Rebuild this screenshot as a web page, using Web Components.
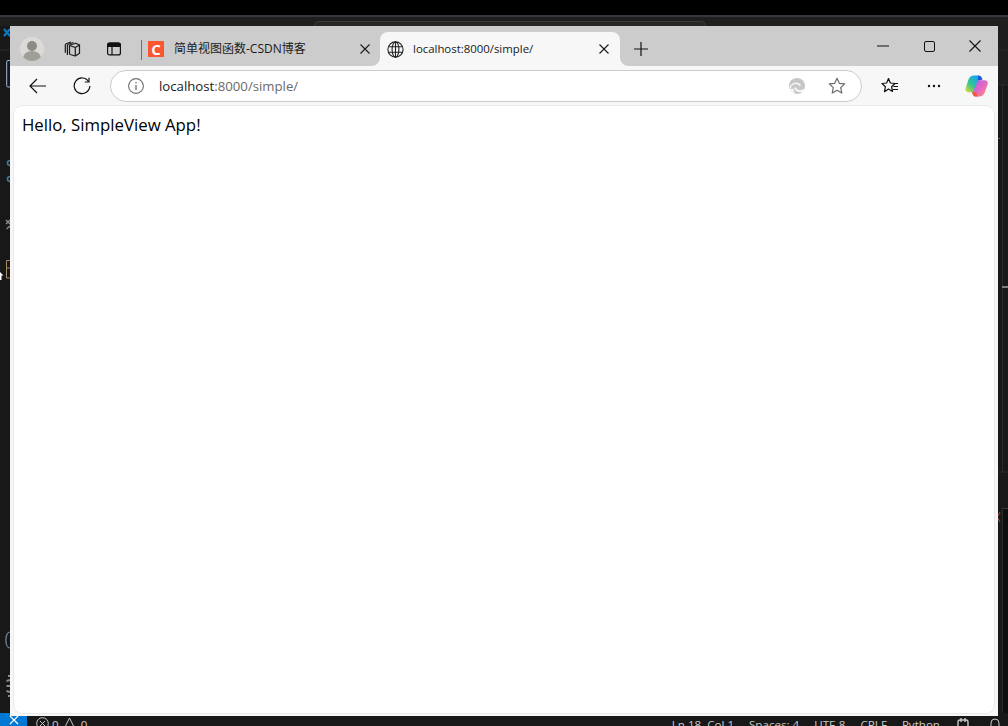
<!DOCTYPE html>
<html lang="zh">
<head>
<meta charset="utf-8">
<title>localhost:8000/simple/</title>
<style>
  html, body { margin: 0; height: 100%; overflow: hidden; background: #181818; }
  body { font-family: "Open Sans", "Noto Sans CJK SC", sans-serif; }
</style>
</head>
<body>

<ide-backdrop>
  <browser-window>
    <tab-item slot="tabs" title-text="简单视图函数-CSDN博客" icon="csdn"></tab-item>
    <tab-item slot="tabs" title-text="localhost:8000/simple/" icon="globe" active></tab-item>
    <address-bar slot="toolbar" host-text="localhost" path-text=":8000/simple/"></address-bar>
    <hello-page>Hello, SimpleView App!</hello-page>
  </browser-window>
</ide-backdrop>

<script>
'use strict';

const ICONS = {
  collections: '<svg width="18" height="18" viewBox="0 0 18 18" fill="none" stroke="#1a1a1a" stroke-width="1.2" stroke-linejoin="round"><path d="M6.5 5.200 12.800 3.200 16.500 5v8.300L12.300 16 7.300 14.500C6.800 14.300 6.500 14 6.500 13.500z"/><path d="M12.300 16V7.500L6.700 5.500M12.300 7.500 16.500 5"/><path d="M4.400 15V5.400c0-.5.300-.9.800-1.100L10.500 2.500"/><path d="M2.300 12.800V5c0-.6.300-1 .9-1.200L8 2"/></svg>',
  verticalTabs: '<svg width="16" height="16" viewBox="0 0 16 16" fill="none" stroke="#111" stroke-width="1.2"><rect x="1.6" y="2.1" width="12.8" height="11.8" rx="2"/><path d="M6 5.5v8.4"/><path d="M1.6 4.2c0-1.2 1-2.1 2-2.1h8.8c1 0 2 .9 2 2.1v1.3H1.6z" fill="#111"/></svg>',
  close: '<svg width="10" height="10" viewBox="0 0 10 10" stroke="#1a1a1a" stroke-width="1.1"><path d="M.5.5l9 9M9.5.5l-9 9"/></svg>',
  globe: '<svg width="17" height="17" viewBox="0 0 17 17" fill="none" stroke="#222" stroke-width="1.1"><circle cx="8.5" cy="8.5" r="7.6"/><ellipse cx="8.5" cy="8.5" rx="3.4" ry="7.6"/><path d="M8.5.9v15.2M1.5 5.8h14M1.5 11.2h14"/></svg>',
  plus: '<svg width="14" height="14" viewBox="0 0 14 14" stroke="#111" stroke-width="1.2"><path d="M7 0v14M0 7h14"/></svg>',
  back: '<svg width="18" height="16" viewBox="0 0 18 16" fill="none" stroke="#111" stroke-width="1.2"><path d="M17 8H1M8 1 1 8l7 7"/></svg>',
  refresh: '<svg width="18" height="18" viewBox="0 0 18 18" fill="none" stroke="#111" stroke-width="1.2"><path d="M15.6 4.6A7.8 7.8 0 1 0 16.8 9"/><path d="M16 .8v4.2h-4.2"/></svg>',
  info: '<svg width="16" height="16" viewBox="0 0 16 16" fill="none" stroke="#6e6e6e" stroke-width="1.1"><circle cx="8" cy="8" r="7.4"/><path d="M8 7v5" stroke-width="1.3"/><circle cx="8" cy="4.7" r=".8" fill="#6e6e6e" stroke="none"/></svg>',
  edge: '<svg width="16" height="16" viewBox="0 0 16 16" fill="none"><circle cx="8" cy="8" r="8" fill="#c6c6c6"/><path d="M.8 10.500C2 6.800 5.200 5 8 5.400c1.800.3 3 1.300 3.300 2.600" stroke="#f7f7f7" stroke-width="1.500"/><path d="M6.200 9.500c.3 3 4 5 9 2.500" stroke="#f7f7f7" stroke-width="2"/><path d="M.5 11c1.500 3 4 4.800 7 5-2-1.200-3.200-3-3-5.500z" fill="#f7f7f7"/></svg>',
  star: '<svg width="18" height="18" viewBox="0 0 18 18" fill="none" stroke="#6a6a6a" stroke-width="1.2" stroke-linejoin="round"><path d="M9 1.300l2.300 5 5.400.6-4 3.700 1.100 5.400L9 13.300 4.200 16l1.100-5.400-4-3.700 5.400-.6z"/></svg>',
  favorites: '<svg width="18" height="18" viewBox="0 0 18 18" fill="none" stroke="#111" stroke-width="1.2" stroke-linejoin="round"><path d="M7.500 1.500 9.400 6l4.600.5-3.400 3.200.9 4.700-4-2.400-4 2.700.9-5L1 6.500 5.600 6z"/><path d="M12.500 9.500H17M11.500 12.500H17M14 6.500h3"/></svg>',
  more: '<svg width="14" height="4" viewBox="0 0 14 4" fill="#111"><circle cx="2" cy="2" r="1.200"/><circle cx="7" cy="2" r="1.200"/><circle cx="12" cy="2" r="1.200"/></svg>',
  copilot: `<svg width="23" height="22" viewBox="0 0 24 22">
    <defs>
      <linearGradient id="cpA" x1="0" y1="1" x2="1" y2="0"><stop offset="0" stop-color="#f0dc30"/><stop offset=".4" stop-color="#35c98a"/><stop offset=".8" stop-color="#1aa6ee"/><stop offset="1" stop-color="#1f7fe6"/></linearGradient>
      <linearGradient id="cpB" x1="0" y1="0" x2="1" y2="1"><stop offset="0" stop-color="#a55cf0"/><stop offset=".6" stop-color="#ee6cb8"/><stop offset="1" stop-color="#fba35c"/></linearGradient>
    </defs>
    <path d="M9.500 0h5l2 4-6 13.500H4C1.500 17.500 0 16 .4 13.800L3.500 4.500C4.500 1.500 6.500 0 9.500 0z" fill="url(#cpA)"/>
    <path d="M14 0c2 0 3.200 1.300 3.700 3l.6 1.500-5 .5z" fill="#1b54d8"/>
    <path d="M13.500 5h6.500c2.700 0 4.300 1.800 3.700 4l-3 8.500c-.9 2.700-3 4.500-5.700 4.500h-5l-2-4.500z" fill="url(#cpB)"/>
    <path d="M7 17.500h4.500L13.500 22H11c-2 0-3.200-1.700-4-4.500z" fill="#ee5a3a"/>
  </svg>`,
  csdn: '<span class="csdn">C</span>'
};

// shorthand: shadow root + html in one call
function mount(el, html) {
  el.attachShadow({ mode: 'open' }).innerHTML = html;
}

class IdeBackdrop extends HTMLElement {
  connectedCallback() {
    mount(this, `
      <style>
        :host { display: grid; grid-template-rows: 26px 690px 10px; grid-template-columns: 10px 988px 10px; height: 726px; background: #181818; color: #ccc; }
        .top { grid-column: 1 / 4; background: #000; display: flex; flex-direction: column; }
        .top .band { height: 15px; }
        .top .rule { height: 2px; background: #3b3540; }
        .top .title { flex: 1; background: #1f1f1f; display: flex; justify-content: center; padding-top: 4px; box-sizing: border-box; }
        .top .search { width: 390px; margin-left: 12px; border: 1px solid #3a3a3a; border-bottom: 0; border-radius: 5px 5px 0 0; background: #262626; }
        .left, .right { overflow: hidden; background: #181818; }
        svg { display: block; }
      </style>
      <div class="top"><div class="band"></div><div class="rule"></div><div class="title"><div class="search"></div></div></div>
      <div class="left">
        <svg width="10" height="690" viewBox="0 0 10 690" fill="none">
          <path d="M0 24h10" stroke="#2b2b2b"/>
          <path d="M4 3l6 7M10 3l-6 7" stroke="#0a7ac0" stroke-width="2.200"/>
          <path d="M10 34.500H8c-.8 0-1.300.5-1.300 1.300v24c0 .8.500 1.200 1.300 1.200h2" stroke="#9ab8d8"/>
          <circle cx="10" cy="137" r="2.500" stroke="#4a7a9a" stroke-width="1.500"/>
          <circle cx="10" cy="153" r="2.500" stroke="#4a7a9a" stroke-width="1.500"/>
          <path d="M6 194l4 4M10 194l-4 4M6.500 203l3.500-3" stroke="#8a8a8a" stroke-width="1.500"/>
          <path d="M10 234.500H6.500v17.500H10M10 242H6.500" stroke="#a58a62"/>
          <path d="M0 246l3.500 3.500H1.500V254H0z" fill="#fff"/>
          <path d="M10 606c-5.500 0-5.500 16 0 16" stroke="#7a8a9a" stroke-width="1.200"/>
          <path d="M8 650h2M6.500 655l3.500-1M6.500 660h3.500M6.500 665l3.500 1M8 670h2" stroke="#8a8a8a" stroke-width="2"/>
          <rect y="687" width="10" height="3" fill="#0078d4"/>
        </svg>
      </div>
      <slot></slot>
      <div class="right">
        <svg width="10" height="690" viewBox="0 0 10 690" fill="none">
          <rect width="10" height="59" fill="#1e1e1e"/>
          <rect x="4" y="482" width="6" height="205" fill="#0e0e0e"/>
          <path d="M0 24h10M0 59h10M0 446h10" stroke="#2b2b2b"/>
          <path d="M4.500 59v387M4.500 482v205" stroke="#2a2a2a"/>
          <path d="M4 482.500h6" stroke="#3a3a3a"/>
          <rect x="4" y="260" width="6" height="2" fill="#7d7d7d"/>
          <rect y="112" width="2" height="1" fill="#3c6e3c"/>
          <path d="M0 490l2-4M0 492l2 4" stroke="#b84a4a"/>
        </svg>
      </div>
      <status-bar style="grid-column: 1 / 4"></status-bar>
    `);
  }
}

class StatusBar extends HTMLElement {
  connectedCallback() {
    mount(this, `
      <style>
        :host { display: flex; height: 10px; background: #181818; color: #c8c8c8; font: 11.600px "Open Sans", sans-serif; overflow: hidden; }
        .remote { width: 27px; background: #0078d4; display: flex; justify-content: center; box-sizing: border-box; }
        .left { display: flex; align-items: flex-start; gap: 3px; margin-left: 9px; padding-top: 1px; line-height: 16px; }
        .right { margin-left: auto; display: flex; gap: 15px; padding: 1px 7px 0 0; line-height: 16px; }
        svg { display: block; flex: none; }
        span { white-space: nowrap; }
      </style>
      <div class="remote"><svg width="14" height="10" viewBox="0 0 14 10" fill="none" stroke="#fff" stroke-width="1.200"><path d="M3 0l4 4-4 4M11 0 7 4l4 4"/></svg></div>
      <div class="left">
        <svg width="13" height="13" viewBox="0 0 13 13" fill="none" stroke="#c8c8c8"><circle cx="6.500" cy="6.500" r="5.800"/><path d="M4 4l5 5M9 4l-5 5"/></svg><span>0</span>
        <svg width="13" height="13" viewBox="0 0 13 13" fill="none" stroke="#c8c8c8" style="margin-left:1px"><path d="M6.500 1 12 12H1z"/></svg><span style="margin-left:2px">0</span>
      </div>
      <div class="right">
        <span>Ln 18, Col 1</span><span>Spaces: 4</span><span>UTF-8</span><span>CRLF</span><span>Python</span>
        <svg width="14" height="14" viewBox="0 0 14 14" fill="none" stroke="#c8c8c8" stroke-width="1.400" style="margin-left:1px"><rect x="2" y="3" width="10" height="8" rx="2"/><path d="M5 1v4M9 1v4"/></svg>
        <svg width="12" height="14" viewBox="0 0 12 14" fill="none" stroke="#c8c8c8" style="margin-left:4px"><path d="M2 12V6a4 4 0 0 1 8 0v6"/></svg>
      </div>
    `);
  }
}

class BrowserWindow extends HTMLElement {
  connectedCallback() {
    mount(this, `
      <style>
        :host { display: flex; flex-direction: column; background: #f7f7f7; min-width: 0; }
        .strip { height: 40px; background: #ccc; display: flex; align-items: stretch; flex: none; }
        .profile { width: 44px; display: flex; align-items: center; justify-content: center; padding: 6px 0 0 0; box-sizing: border-box; }
        .avatar { width: 24px; height: 24px; border-radius: 50%; background: #dcdad6; position: relative; overflow: hidden; }
        .avatar::before { content: ""; position: absolute; left: 7px; top: 4px; width: 10px; height: 10px; border-radius: 50%; background: #8d8b86; }
        .avatar::after { content: ""; position: absolute; left: 3px; top: 14px; width: 18px; height: 14px; border-radius: 50%; background: #a09e99; }
        .btn { display: flex; align-items: center; justify-content: center; padding-top: 6px; box-sizing: border-box; flex: none; }
        .sep { width: 1px; height: 20px; background: #6f6f6f; align-self: center; margin: 8px 5px 0 6px; flex: none; }
        .tabs { display: flex; align-items: flex-end; }
        .caption { margin-left: auto; display: flex; }
        .caption div { width: 46px; height: 40px; display: flex; align-items: center; justify-content: center; }
        .bar { height: 39px; display: flex; align-items: center; flex: none; }
        .tool { display: flex; align-items: center; justify-content: center; flex: none; box-sizing: border-box; }
        .view { flex: 1; display: flex; padding: 1px 4px 3px 4px; min-height: 0; background: #f7f7f7; }
      </style>
      <div class="strip">
        <div class="profile"><div class="avatar"></div></div>
        <div class="btn" style="width:41px; margin-left:-3px">${ICONS.collections}</div>
        <div class="btn" style="width:43px">${ICONS.verticalTabs}</div>
        <div class="sep"></div>
        <div class="tabs"><slot name="tabs"></slot></div>
        <div class="btn" style="width:42px; padding-top:5px">${ICONS.plus}</div>
        <div class="caption">
          <div><svg width="12" height="2" viewBox="0 0 12 2" stroke="#111"><path d="M0 1h12"/></svg></div>
          <div><svg width="11" height="11" viewBox="0 0 11 11" fill="none" stroke="#111"><rect x=".5" y=".5" width="10" height="10" rx="1.500"/></svg></div>
          <div><svg width="12" height="12" viewBox="0 0 12 12" stroke="#111" stroke-width="1.100"><path d="M.5.5l11 11M11.500.5l-11 11"/></svg></div>
        </div>
      </div>
      <div class="bar">
        <div class="tool" style="width:56px">${ICONS.back}</div>
        <div class="tool" style="width:32px">${ICONS.refresh}</div>
        <slot name="toolbar"></slot>
        <div class="tool" style="width:56px">${ICONS.favorites}</div>
        <div class="tool" style="width:32px">${ICONS.more}</div>
        <div class="tool" style="width:48px; padding-left:4px">${ICONS.copilot}</div>
      </div>
      <div class="view"><slot></slot></div>
    `);
  }
}

class TabItem extends HTMLElement {
  connectedCallback() {
    mount(this, `
      <style>
        :host { display: flex; align-items: center; height: 34px; box-sizing: border-box; position: relative; font: 12px "Open Sans", "Noto Sans CJK SC", sans-serif; color: #1a1a1a; flex: none; }
        :host([active]) { width: 240px; background: #f7f7f7; border-radius: 8px 8px 0 0; padding-left: 6px; font-size: 11.400px; --x-gap: 11px; }
        :host(:not([active])) { width: 233px; --x-gap: 10px; }
        /* the little reverse corners either side of the active tab */
        :host([active])::before, :host([active])::after { content: ""; position: absolute; bottom: 0; width: 8px; height: 8px; background: radial-gradient(circle at var(--cx) 0, #ccc 7.5px, #f7f7f7 8px); }
        :host([active])::before { left: -8px; --cx: 0; }
        :host([active])::after { right: -8px; --cx: 100%; }
        .ico { width: 18px; height: 18px; display: flex; align-items: center; justify-content: center; flex: none; }
        .csdn { width: 16px; height: 16px; background: #fc5531; color: #fff; font: 700 15px/16px "Open Sans", sans-serif; text-align: center; display: block; }
        .label { margin-left: 9px; padding-bottom: 2px; white-space: nowrap; flex: 1; }
        .x { width: 10px; height: 10px; margin-right: var(--x-gap); display: flex; flex: none; }
      </style>
      <div class="ico">${ICONS[this.getAttribute('icon')]}</div>
      <div class="label">${this.getAttribute('title-text')}</div>
      <div class="x">${ICONS.close}</div>
    `);
  }
}

class AddressBar extends HTMLElement {
  connectedCallback() {
    mount(this, `
      <style>
        :host { display: flex; align-items: center; flex: 1; height: 32px; margin: 1px 0 0 12px; box-sizing: border-box; background: #fff; border: 1px solid #ccc; border-radius: 16px; font: 13.200px "Open Sans", sans-serif; min-width: 0; }
        .info { margin-left: 17px; display: flex; }
        .url { margin-left: 15px; white-space: nowrap; color: #1a1a1a; }
        .url span { color: #6b6b6b; }
        .end { margin-left: auto; display: flex; align-items: center; gap: 23px; padding-right: 15px; }
        .end > * { display: block; }
      </style>
      <div class="info">${ICONS.info}</div>
      <div class="url">${this.getAttribute('host-text')}<span>${this.getAttribute('path-text')}</span></div>
      <div class="end">${ICONS.edge}${ICONS.star}</div>
    `);
  }
}

class HelloPage extends HTMLElement {
  connectedCallback() {
    mount(this, `
      <style>
        :host { display: block; flex: 1; background: #fff; border-radius: 8px; color: #000; box-shadow: 0 0 0 .5px #dcdcdc; padding: 8px; font: 16.800px/22px "Open Sans", sans-serif; }
      </style>
      <slot></slot>
    `);
  }
}

customElements.define('ide-backdrop', IdeBackdrop);
customElements.define('status-bar', StatusBar);
customElements.define('browser-window', BrowserWindow);
customElements.define('tab-item', TabItem);
customElements.define('address-bar', AddressBar);
customElements.define('hello-page', HelloPage);
</script>
</body>
</html>
